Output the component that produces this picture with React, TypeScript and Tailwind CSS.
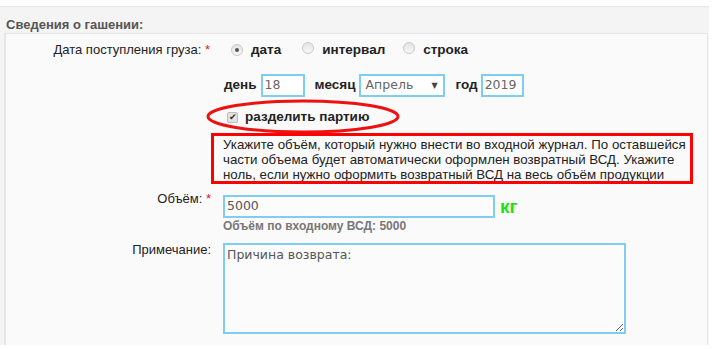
import React from "react";

const sans = { fontFamily: '"Liberation Sans", Arial, sans-serif' };
const inputFont = { fontFamily: '"DejaVu Sans", Verdana, sans-serif' };

function Radio({ checked }: { checked?: boolean }) {
  return (
    <span className="inline-flex w-[12px] h-[12px] rounded-full border border-[#c9c9c9] bg-gradient-to-b from-[#e4e4e4] to-[#f6f6f6] items-center justify-center">
      {checked && <span className="w-[4px] h-[4px] rounded-full bg-[#555]" />}
    </span>
  );
}

export default function App() {
  return (
    <div className="w-[715px] h-[349px] bg-white overflow-hidden text-[#222]" style={sans}>
      <div className="h-[6px] bg-white" />
      <div className="w-[709px] bg-[#f4f4f4] border-t border-[#e6e6e6]">
        <div className="h-[26px] pl-[6px] pt-[10px] text-[13px] leading-[15px] font-bold text-[#555]">
          Сведения о гашении:
        </div>
        <div className="relative ml-[4px] w-[704px] bg-[#fafafa] border-t border-l-2 border-r border-[#e6e6e6] pb-[11px]">
          {/* Row 1 */}
          <div className="flex pt-[6px] h-[26px] items-center">
            <div className="w-[204px] text-right text-[13px] leading-[16px]">
              Дата поступления груза: <span className="text-[#e02020]">*</span>
            </div>
            <div className="flex items-center ml-[21px] text-[13.5px] font-bold">
              <Radio checked />
              <span className="ml-[8px]">дата</span>
              <span className="ml-[21px]"><Radio /></span>
              <span className="ml-[8px]">интервал</span>
              <span className="ml-[18px]"><Radio /></span>
              <span className="ml-[8px]">строка</span>
            </div>
          </div>
          {/* Row 2 */}
          <div className="flex items-center mt-[14px] h-[23px] pl-[218px] text-[13.5px]">
            <span className="font-bold">день</span>
            <div className="ml-[4px] w-[44px] h-[23px] border-2 border-[#7fcdef] bg-white pl-[2px] flex items-center text-[12.5px] text-[#666]" style={inputFont}>18</div>
            <span className="font-bold ml-[10px]">месяц</span>
            <div className="ml-[3px] w-[86px] h-[23px] border-2 border-[#7fcdef] bg-white pl-[5px] pr-[5px] flex items-center justify-between text-[12.5px] text-[#666]" style={inputFont}>
              <span>Апрель</span>
              <span className="text-[8px] text-[#444]">▼</span>
            </div>
            <span className="font-bold ml-[11px]">год</span>
            <div className="ml-[3px] w-[43px] h-[23px] border-2 border-[#7fcdef] bg-white pl-[2px] flex items-center text-[12.5px] text-[#666]" style={inputFont}>2019</div>
          </div>
          {/* Row 3 */}
          <div className="flex items-center mt-[10px] h-[20px] pl-[221px]">
            <span className="inline-flex w-[11px] h-[11px] rounded-[2px] border border-[#bdbdbd] bg-[#e2e2e2] items-center justify-center text-[9px] leading-none text-[#333]">✔</span>
            <span className="ml-[7px] text-[13.5px] font-bold">разделить партию</span>
          </div>
          <svg className="absolute left-[200px] top-[65px]" width="194" height="35" viewBox="0 0 194 35">
            <ellipse cx="97" cy="17.5" rx="95" ry="15.5" fill="none" stroke="#ee1111" strokeWidth="3" />
          </svg>
          {/* Red box */}
          <div className="mt-[6px] ml-[205px] w-[482px] h-[51px] border-[3px] border-[#ff0000] pl-[9px] pt-[1px] text-[13.3px] leading-[15px] text-[#222] whitespace-nowrap overflow-hidden">
            Укажите объём, который нужно внести во входной журнал. По оставшейся
            <br />
            части объема будет автоматически оформлен возвратный ВСД. Укажите
            <br />
            ноль, если нужно оформить возвратный ВСД на весь объём продукции
          </div>
          {/* Volume */}
          <div className="flex items-start mt-[11px]">
            <div className="w-[205px] text-right text-[13px] leading-[16px] -mt-[4px]">
              Объём: <span className="text-[#e02020]">*</span>
            </div>
            <div className="ml-[12px]">
              <div className="flex items-center">
                <div className="w-[272px] h-[23px] border-2 border-[#7fcdef] bg-[#fcfcfc] pl-[2px] flex items-center text-[12.5px] text-[#555]" style={inputFont}>5000</div>
                <span className="ml-[5px] text-[19px] font-bold text-[#22e010] leading-none">кг</span>
              </div>
              <div className="mt-[1px] text-[12px] leading-[14px] font-bold text-[#777]">Объём по входному ВСД: 5000</div>
            </div>
          </div>
          {/* Note */}
          <div className="flex items-start mt-[10px]">
            <div className="w-[205px] text-right text-[13px] leading-[16px] -mt-[1px]">Примечание:</div>
            <textarea
              readOnly
              defaultValue="Причина возврата:"
              className="ml-[12px] w-[403px] h-[91px] border-2 border-[#7fcdef] bg-[#fbfbfb] px-[2px] pt-[1px] text-[12.5px] text-[#555] outline-none"
              style={inputFont}
            />
          </div>
        </div>
      </div>
    </div>
  );
}
